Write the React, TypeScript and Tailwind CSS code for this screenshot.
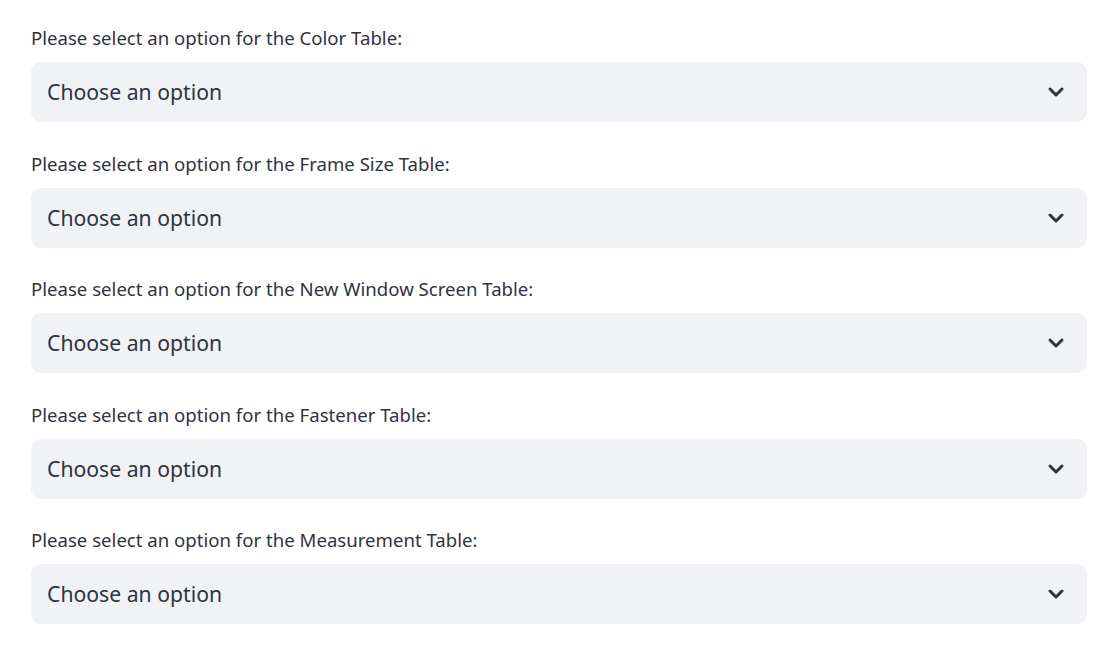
import React from 'react';
import { ChevronDown } from 'lucide-react';

const tables = ['Color Table', 'Frame Size Table', 'New Window Screen Table', 'Fastener Table', 'Measurement Table'];

export default function App() {
  return (
    <div className="min-h-screen bg-white pl-[31px] pr-[28px] pt-[25px] text-[#31333f]" style={{ fontFamily: '"Source Sans Pro", "Noto Sans", sans-serif' }}>
      <div className="flex flex-col gap-[28.5px]">
        {tables.map(t => (
          <div key={t} className="flex flex-col">
            <label className="h-[26px] mb-[11px] flex items-center text-[18.6px] leading-[26px]">
              Please select an option for the {t}:
            </label>
            <div className="h-[60px] rounded-[10px] bg-[#f0f2f6] flex items-center justify-between pl-[16px] pr-[19px] cursor-pointer">
              <span className="text-[21.2px]">Choose an option</span>
              <ChevronDown size={24} strokeWidth={3} className="text-[#31333f]" />
            </div>
          </div>
        ))}
      </div>
    </div>
  );
}
